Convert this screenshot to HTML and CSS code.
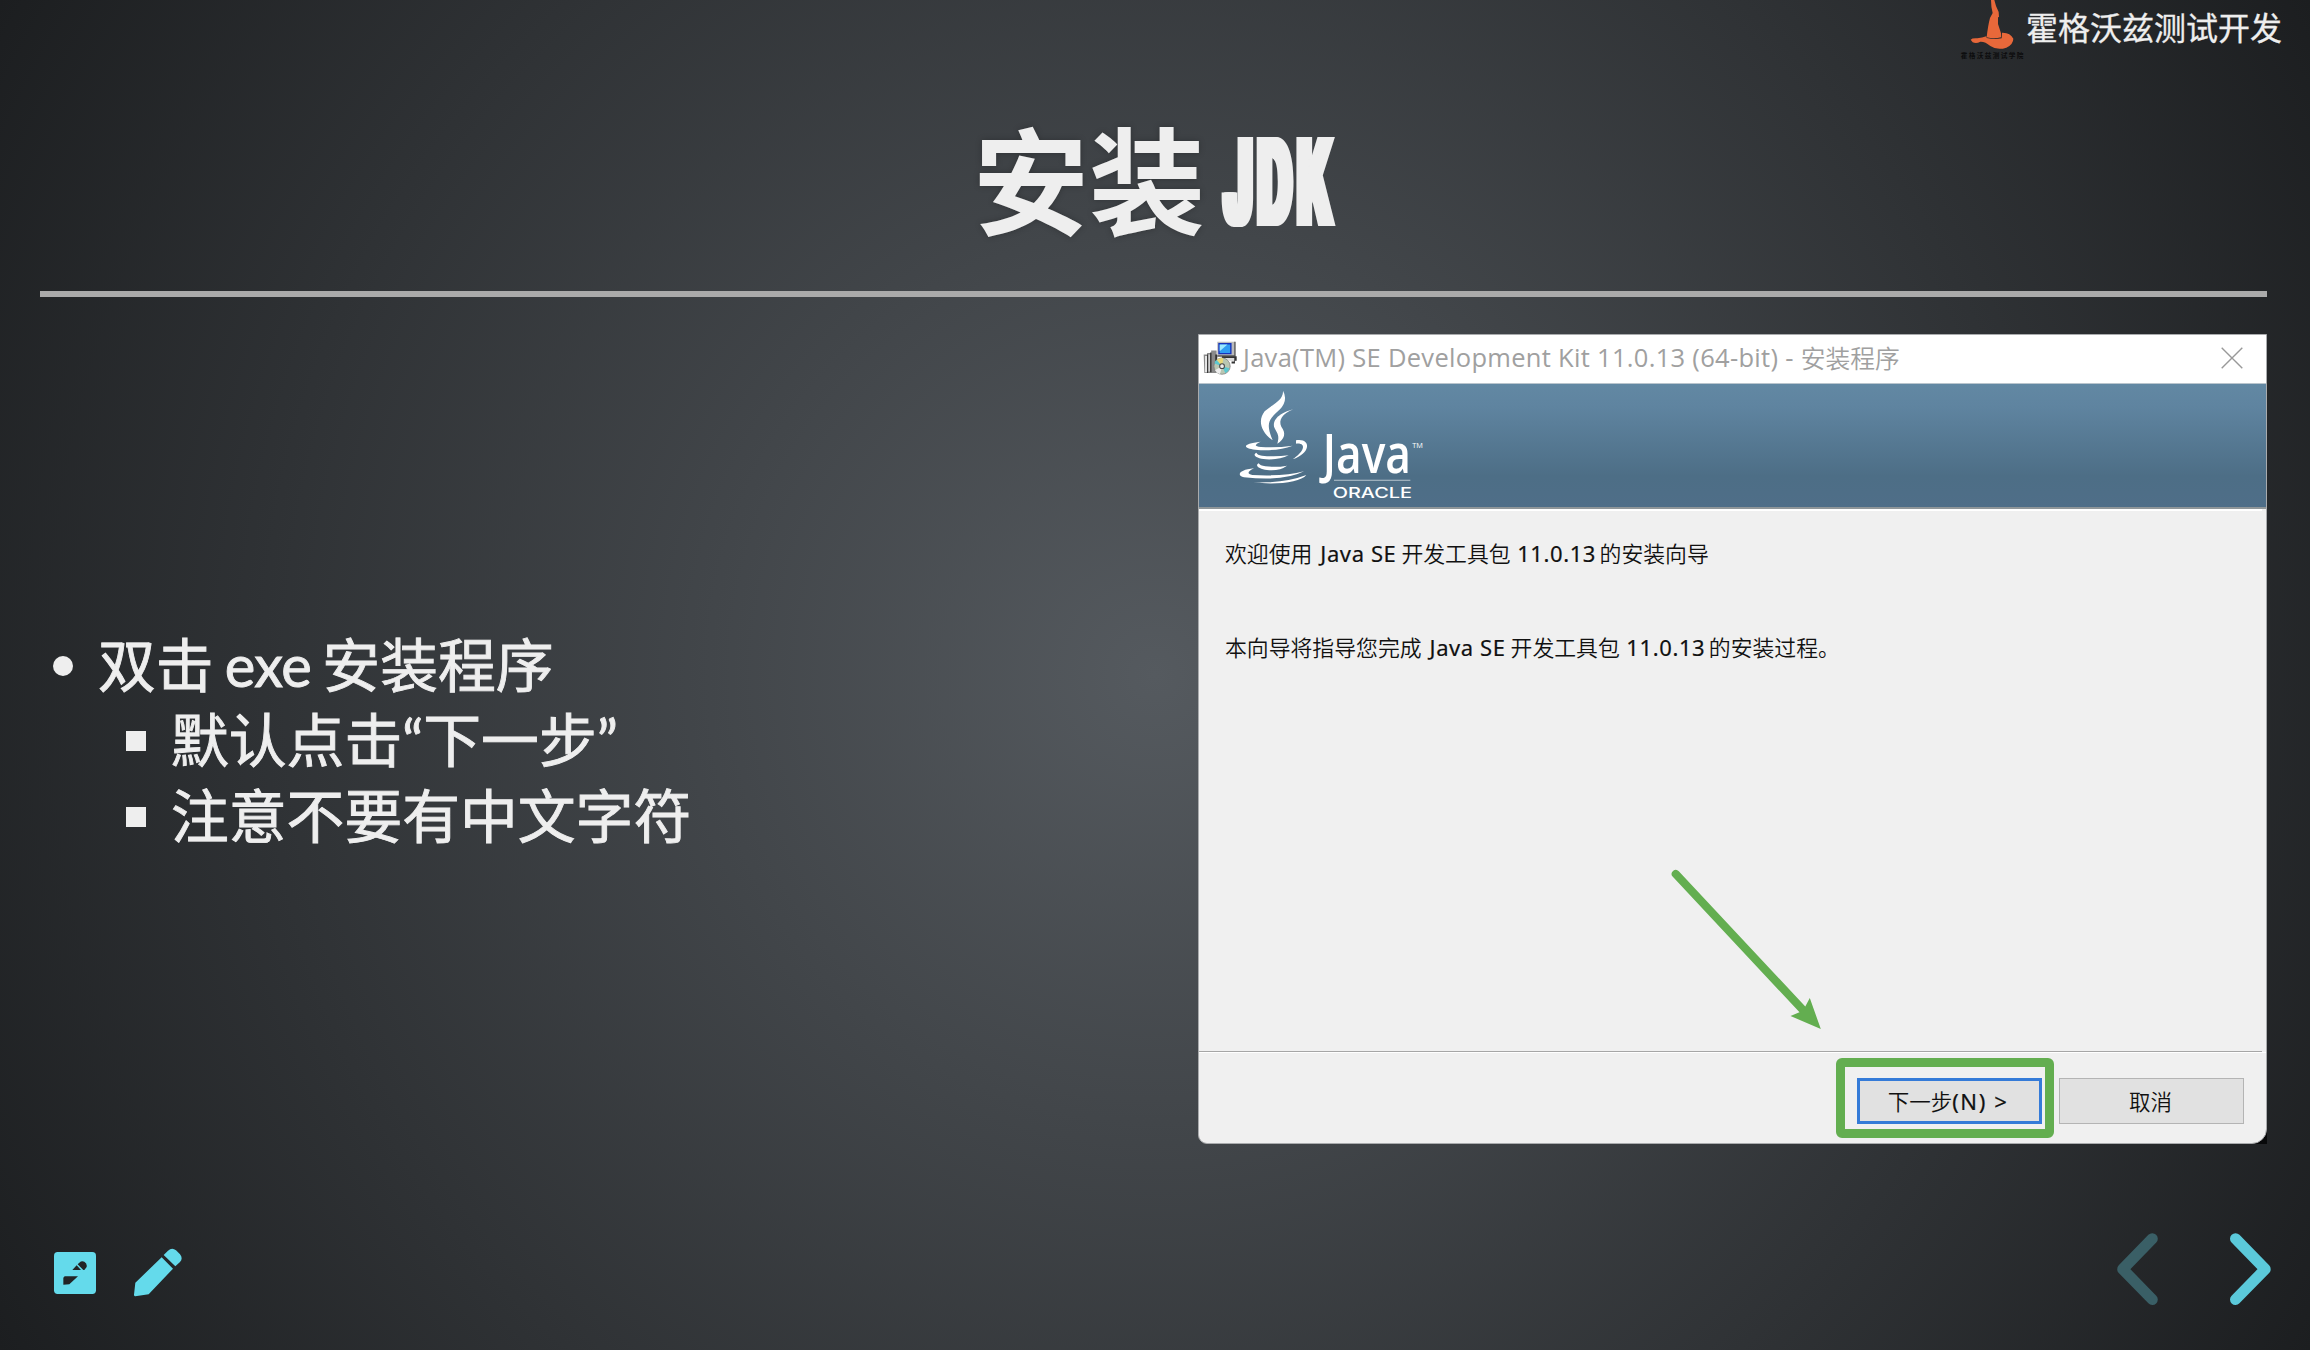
FILE: index.html
```html
<!DOCTYPE html>
<html lang="zh-CN">
<head>
<meta charset="utf-8">
<title>安装 JDK</title>
<link rel="stylesheet" href="styles.css">
</head>
<body>
<div class="slide">
  <header class="brand">
    <svg class="brand-logo" width="68" height="62" viewBox="0 0 204 186">
      <path fill="#e8683a" d="M93 0 L103 0 Q106 16 116 36 L117 51 L114 52 L114 72 L123 100 L123 112 Q103 118 80 112 Q84 76 90 54 L98 39 Q93 20 93 0Z"/>
      <path fill="#e8683a" d="M32 119 Q36 114 52 115 Q67 114 79 109 L80 114 Q104 120 125 115 L126 98 Q151 97 160 116 Q160 133 139 143 Q112 152 91 138 Q75 124 61 125 Q49 132 38 127Z"/>
      <text class="brand-mark" x="2" y="175" textLength="188">霍格沃兹测试学院</text>
    </svg>
    <span class="brand-name">霍格沃兹测试开发</span>
  </header>
  <h1 class="title"><span>安装</span><span class="title-latin">JDK</span></h1>
  <hr class="rule">
  <main class="columns">
    <ul class="points">
      <li><span class="mixed">双击 <span class="en">exe</span> 安装程序</span>
        <ul>
          <li>默认点击“下一步”</li>
          <li>注意不要有中文字符</li>
        </ul>
      </li>
    </ul>
    <div class="figure">
    <section class="dialog">
      <div class="titlebar">
        <svg class="app-icon" width="34" height="34" viewBox="0 0 100 100">
          <path fill="#8a8a8a" d="M2 40H12V35H24V28H40V94H4Z"/>
          <path fill="#e8e8e8" d="M6 44H12V92H6ZM16 40H20V90H16Z"/>
          <path fill="#333" d="M12 40H15V94H12ZM21 34H25V92H21ZM36 40H42V60H36Z"/>
          <path fill="#bbb" d="M42 2H94V44H42Z"/>
          <path fill="#555" d="M92 2H96V46H42V42H92Z"/>
          <path fill="#1733bb" d="M45 6H84V39H45Z"/>
          <path fill="#2f9df2" d="M49 10H80V35H49Z"/>
          <path fill="#9be9ff" d="M49 10H72L49 30Z"/>
          <path fill="#ddd" d="M48 47H98V59H80Z"/>
          <path fill="#333" d="M56 45H99V58H94V66H84V60H92V50H56Z"/>
          <circle cx="56" cy="74" r="24" fill="#b9c6b2" stroke="#777" stroke-width="2"/>
          <path fill="#e8d879" d="M56 74L40 55Q50 47 60 51Z"/>
          <path fill="#5cc7cf" d="M56 74L34 66Q34 59 40 56ZM56 74L78 80Q75 90 66 95Z"/>
          <path fill="#eee" d="M56 74L50 97Q40 94 35 86Z"/>
          <circle cx="56" cy="74" r="7" fill="#eee" stroke="#444" stroke-width="3"/>
        </svg>
        <span class="app-title">Java(TM) SE Development Kit 11.0.13 (64-bit) - </span><span class="app-title-cjk">安装程序</span>
        <svg class="close" width="22" height="22" viewBox="0 0 22 22"><path d="M.7.7L21.3 21.3M21.3.7L.7 21.3"/></svg>
      </div>
      <div class="banner">
        <svg class="java-logo" width="194" height="114" viewBox="130 190 582 342">
          <g fill="#fff">
            <path d="M277 198Q293 226 268 254C238 282 222 292 246 347C206 318 203 284 222 260C246 238 279 228 277 198Z"/>
            <path d="M308 254C268 264 242 286 252 311C261 328 267 334 260 357C282 343 287 326 272 306C263 287 274 268 308 254Z"/>
            <path d="M210 351C155 357 153 370 194 375Q258 381 306 363Q258 370 211 367Q180 365 210 351Z"/>
            <path d="M316 347C360 339 364 385 306 404C340 382 350 354 316 357Z"/>
            <path d="M197 384C183 392 199 402 226 404Q267 406 294 392Q252 397 214 393Q200 391 197 384Z"/>
            <path d="M204 416C191 423 206 433 229 436Q266 440 289 423Q257 429 224 425Q208 423 204 416Z"/>
            <path d="M190 431C146 435 136 452 160 458Q280 471 340 440Q278 456 185 451Q160 446 190 431Z"/>
            <path d="M347 451C331 473 254 482 188 473Q282 476 347 451Z"/>
            <path d="M430 465H659V468H430Z" opacity=".6"/>
            <text class="java-word" x="396" y="445" textLength="265" lengthAdjust="spacingAndGlyphs">Java</text>
            <text class="java-tm" x="665" y="371" textLength="32" lengthAdjust="spacingAndGlyphs">TM</text>
            <text class="java-oracle" x="426" y="519" textLength="238" lengthAdjust="spacingAndGlyphs">ORACLE</text>
          </g>
        </svg>
      </div>
      <div class="dialog-body">
        <p>欢迎使用<span class="lat">Java SE</span>开发工具包<span class="lat">11.0.13</span>的安装向导</p>
        <p>本向导将指导您完成<span class="lat">Java SE</span>开发工具包<span class="lat">11.0.13</span>的安装过程。</p>
      </div>
      <div class="dialog-actions">
        <div class="highlight"><button class="btn btn-next">下一步<span class="key">(N) &gt;</span></button></div>
        <button class="btn">取消</button>
      </div>
      <svg class="arrow" width="160" height="170" viewBox="1668 866 160 170">
        <path d="M1675.8 874L1803 1010" stroke="#63ae50" stroke-width="8.2" stroke-linecap="round"/>
        <path d="M1820.8 1029L1809.8 998L1805 1007L1800 1012L1790.5 1016Z" fill="#63ae50"/>
      </svg>
    </section>
    </div>
  </main>
  <footer class="controls">
    <div class="tools">
      <svg width="42" height="42" viewBox="0 0 126 126">
        <rect width="126" height="126" rx="11" fill="#64daeb"/>
        <path fill="#222426" d="M28 77L32 73H72L46 97L28 98ZM55 54L68 40L81 54ZM71 37L76 32Q83 25 91 29Q100 35 98 45L91 54H88Z"/>
      </svg>
      <svg width="50" height="50" viewBox="0 0 150 150">
        <path fill="#64daeb" d="M86 28L120 62L47 139L7 145Q3 145 3 140L7 104ZM92 21L105 8Q117 -3 129 7L141 19Q151 31 141 42L127 55Z"/>
      </svg>
    </div>
    <svg width="154" height="74" viewBox="2117 1232 154 74">
      <path class="chev prev" d="M2152.3 1238.7L2122.7 1269.2L2152.3 1299.5"/>
      <path class="chev" d="M2235.5 1238.7L2265.2 1269.2L2235.5 1299.5"/>
    </svg>
  </footer>
</div>
</body>
</html>
```
FILE: styles.css
```css
* { box-sizing: border-box; }

body {
  margin: 0;
  color: #eee;
  font-family: Lato, "Noto Sans CJK SC", sans-serif;
}

.slide {
  width: 2310px;
  height: 1350px;
  overflow: hidden;
  display: grid;
  grid-template-rows: 62px 229px 6px 913px 140px;
  background: radial-gradient(circle farthest-corner at center, #555a5f 0%, #1c1e20 100%);
}

.brand {
  display: flex;
  justify-content: flex-end;
  padding-right: 28px;
}
.brand-logo { margin-right: -2px; }
.brand-mark { font: 700 20px "Noto Sans CJK SC", sans-serif; fill: #0c0c0d; }
.brand-name { font-size: 32px; line-height: 56px; -webkit-text-stroke: .3px #eee; }

.title {
  margin: 0;
  display: flex;
  justify-content: center;
  gap: 18px;
  font: 700 116px/227px "Noto Sans CJK SC", sans-serif;
  text-shadow: 0 0 6px rgba(0, 0, 0, .25);
}
.title-latin {
  width: 114px;
  font: 900 122px/239px Inter, sans-serif;
  letter-spacing: 14px;
  transform: scaleX(.39);
  transform-origin: 0 50%;
  text-shadow: 3px 0 0 #eee, -6px 0 0 #eee, 7px 0 0 #eee, 10px 0 0 #eee;
}

.rule { margin: 0 43px 0 40px; border: 0; background: #aaa; }

.columns {
  display: grid;
  grid-template-columns: 1198px 1069px;
}

.points, .points ul { margin: 0; padding: 0; list-style: none; }
.points { padding: 330px 0 0 98px; font-size: 57.8px; line-height: 75.3px; -webkit-text-stroke: .9px #eee; }
.mixed { word-spacing: -3.6px; }
.en { letter-spacing: -.6px; }
.points ul { padding-left: 73px; }
.points li { position: relative; }
.points > li::before,
.points ul > li::before {
  content: "";
  position: absolute;
  left: -45px;
  top: 29px;
  width: 20px;
  height: 20px;
  border-radius: 50%;
  background: #eee;
}
.points ul > li::before { left: -45px; border-radius: 0; }

.figure { margin-top: 37px; height: 810px; background: linear-gradient(#0000 50%, #08090a 50%) right bottom / 20px 40px no-repeat; }
.dialog {
  position: relative;
  height: 810px;
  display: grid;
  grid-template-rows: 49px 125px 543px 91px;
  border: 1px solid #a9abad;
  border-radius: 0 0 15px 9px;
  background: #f0f0f0;
  color: #111;
  overflow: hidden;
}

.titlebar {
  display: flex;
  align-items: center;
  padding: 0 23px 3px 4px;
  background: #fff;
  border-bottom: 1px solid #b9c5cd;
  color: #a0a0a0;
}
.app-title {
  margin-left: 6px;
  white-space: pre;
  font: 400 25.5px/45px "Open Sans", sans-serif;
  letter-spacing: .3px;
}
.app-title-cjk { font: 350 24.8px/45px "Noto Sans CJK SC", sans-serif; }
.close { margin-left: auto; fill: none; stroke: #999; stroke-width: 1.4; }

.banner {
  padding: 4px 0 0 35px;
  background: linear-gradient(#6288a3 0%, #5f84a0 18%, #4d6e86 75%, #4f6e88 100%);
  border-bottom: 2px solid #8f9699;
}
.java-logo { overflow: visible; }
.java-word { font: 650 160px "Open Sans", sans-serif; }
.java-tm { font: 400 24px "Open Sans", sans-serif; }
.java-oracle { font: 500 43px Inter, sans-serif; }

.dialog-body {
  padding: 22px 0 0 26px;
  border-top: 2px solid #fff;
  border-bottom: 1.5px solid #a6a6a6;
  margin-right: 4px;
}
.dialog-body p {
  margin: 0 0 54px;
  white-space: pre;
  font: 350 21.85px/40px "Noto Sans CJK SC", sans-serif;
}
.lat, .key { font: 400 22px/40px "Noto Sans", sans-serif; -webkit-text-stroke: .2px #111; }
.lat { display: inline-block; width: 89px; padding-left: 3px; letter-spacing: .6px; text-align: center; }
.key { letter-spacing: 1.6px; }

.dialog-actions {
  display: flex;
  align-items: flex-start;
  gap: 5px;
  padding: 4.5px 0 0 637px;
  border-top: 1.5px solid #fff;
}
.highlight {
  width: 218px;
  height: 80px;
  padding: 11px 0 0 11.5px;
  border: 9.7px solid #63ae50;
  border-radius: 6px;
}
.btn {
  width: 185px;
  height: 46px;
  margin-top: 20px;
  padding: 0 2px 0 0;
  border: 1.5px solid #b4b4b4;
  background: #e1e1e1;
  color: #111;
  font: 350 21.5px/40px "Noto Sans CJK SC", sans-serif;
}
.btn-next { display: block; margin: 0; border: 3px solid #357bd8; }

.arrow { position: absolute; left: 469px; top: 531px; fill: none; }

.controls {
  display: flex;
  justify-content: space-between;
  padding: 22px 39px 0 54px;
}
.tools { display: flex; gap: 37px; padding-top: 20px; }
.tools svg:last-child { margin-top: -4px; }
.chev {
  fill: none;
  stroke: #5bc9da;
  stroke-width: 11;
  stroke-linecap: round;
  stroke-linejoin: round;
}
.prev { stroke: #3a5f66; }
```
